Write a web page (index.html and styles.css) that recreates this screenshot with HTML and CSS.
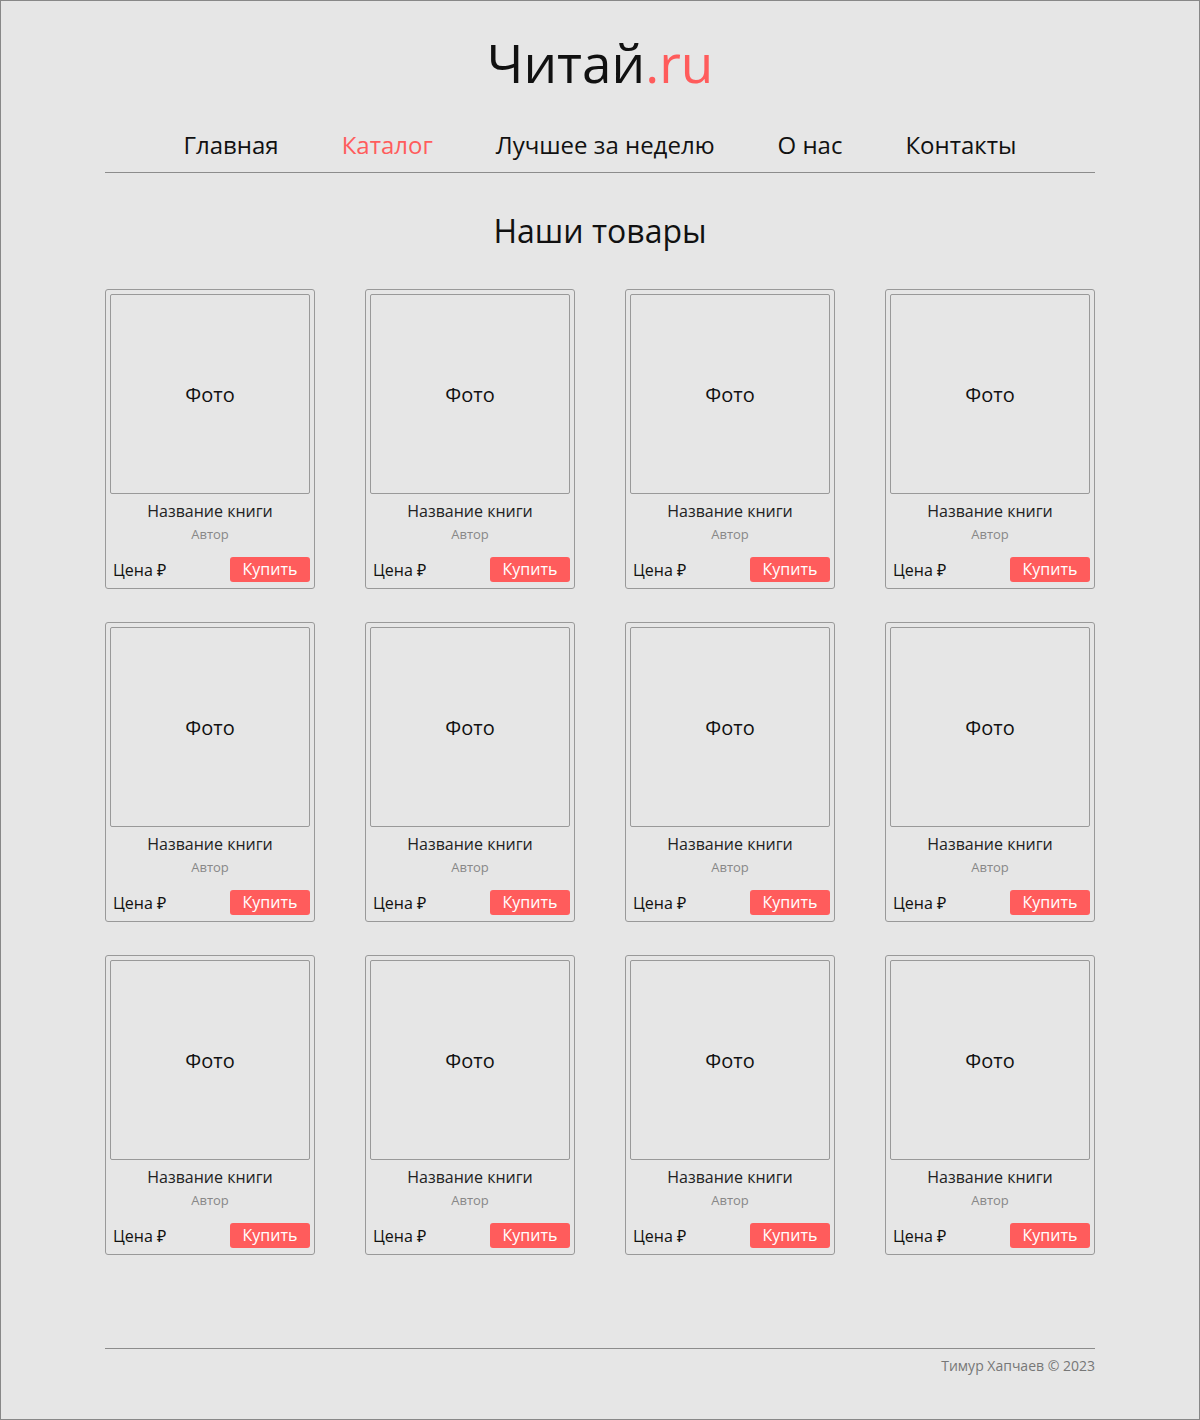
FILE: index.html
```html
<!DOCTYPE html>
<html lang="ru">
<head>
<meta charset="utf-8">
<title>Читай.ru</title>
<link rel="stylesheet" href="styles.css">
</head>
<body>
<div class="page">
  <header class="header">
    <div class="logo">Читай<span class="logo-accent">.ru</span></div>
    <nav class="nav">
      <a class="nav-link" href="#">Главная</a>
      <a class="nav-link nav-link-active" href="#">Каталог</a>
      <a class="nav-link" href="#">Лучшее за неделю</a>
      <a class="nav-link" href="#">О нас</a>
      <a class="nav-link" href="#">Контакты</a>
    </nav>
  </header>
  <main class="main">
    <h1 class="title">Наши товары</h1>
    <div class="grid">
      <div class="card"><div class="photo">Фото</div><div class="book-name">Название книги</div><div class="author">Автор</div><div class="card-bottom"><span class="price">Цена ₽</span><button class="buy">Купить</button></div></div>
      <div class="card"><div class="photo">Фото</div><div class="book-name">Название книги</div><div class="author">Автор</div><div class="card-bottom"><span class="price">Цена ₽</span><button class="buy">Купить</button></div></div>
      <div class="card"><div class="photo">Фото</div><div class="book-name">Название книги</div><div class="author">Автор</div><div class="card-bottom"><span class="price">Цена ₽</span><button class="buy">Купить</button></div></div>
      <div class="card"><div class="photo">Фото</div><div class="book-name">Название книги</div><div class="author">Автор</div><div class="card-bottom"><span class="price">Цена ₽</span><button class="buy">Купить</button></div></div>
      <div class="card"><div class="photo">Фото</div><div class="book-name">Название книги</div><div class="author">Автор</div><div class="card-bottom"><span class="price">Цена ₽</span><button class="buy">Купить</button></div></div>
      <div class="card"><div class="photo">Фото</div><div class="book-name">Название книги</div><div class="author">Автор</div><div class="card-bottom"><span class="price">Цена ₽</span><button class="buy">Купить</button></div></div>
      <div class="card"><div class="photo">Фото</div><div class="book-name">Название книги</div><div class="author">Автор</div><div class="card-bottom"><span class="price">Цена ₽</span><button class="buy">Купить</button></div></div>
      <div class="card"><div class="photo">Фото</div><div class="book-name">Название книги</div><div class="author">Автор</div><div class="card-bottom"><span class="price">Цена ₽</span><button class="buy">Купить</button></div></div>
      <div class="card"><div class="photo">Фото</div><div class="book-name">Название книги</div><div class="author">Автор</div><div class="card-bottom"><span class="price">Цена ₽</span><button class="buy">Купить</button></div></div>
      <div class="card"><div class="photo">Фото</div><div class="book-name">Название книги</div><div class="author">Автор</div><div class="card-bottom"><span class="price">Цена ₽</span><button class="buy">Купить</button></div></div>
      <div class="card"><div class="photo">Фото</div><div class="book-name">Название книги</div><div class="author">Автор</div><div class="card-bottom"><span class="price">Цена ₽</span><button class="buy">Купить</button></div></div>
      <div class="card"><div class="photo">Фото</div><div class="book-name">Название книги</div><div class="author">Автор</div><div class="card-bottom"><span class="price">Цена ₽</span><button class="buy">Купить</button></div></div>
    </div>
  </main>
  <footer class="footer">Тимур Хапчаев © 2023</footer>
</div>
</body>
</html>
```

FILE: styles.css
```css
* { box-sizing: border-box; }
html, body { margin: 0; padding: 0; }
body {
  background: #e6e6e6;
  font-family: "Open Sans", "Noto Sans", sans-serif;
  color: #111;
}
.page {
  width: 1200px;
  height: 1420px;
  border: 1px solid #888;
  background: #e6e6e6;
  display: flex;
  flex-direction: column;
  align-items: center;
}
.header {
  width: 990px;
  display: flex;
  flex-direction: column;
  align-items: center;
  padding-top: 27px;
  border-bottom: 1px solid #8c8c8c;
}
.logo {
  font-size: 53px;
  line-height: 70px;
  color: #111;
}
.logo-accent { color: #ff5c5c; }
.nav {
  display: flex;
  gap: 63px;
  margin-top: 31px;
  padding-bottom: 11px;
}
.nav-link {
  font-size: 24px;
  line-height: 32px;
  color: #111;
  text-decoration: none;
}
.nav-link-active { color: #ff5c5c; }
.main {
  width: 990px;
  display: flex;
  flex-direction: column;
  align-items: center;
}
.title {
  font-weight: 400;
  font-size: 32px;
  line-height: 44px;
  margin: 36px 0 0;
}
.grid {
  margin-top: 36px;
  display: grid;
  grid-template-columns: repeat(4, 210px);
  column-gap: 50px;
  row-gap: 33px;
}
.card {
  height: 300px;
  border: 1px solid #999;
  border-radius: 3px;
  padding: 4px;
  display: flex;
  flex-direction: column;
  align-items: center;
}
.photo {
  width: 200px;
  height: 200px;
  border: 1px solid #999;
  border-radius: 2px;
  display: flex;
  align-items: center;
  justify-content: center;
  font-size: 20px;
}
.book-name {
  margin-top: 6px;
  font-size: 16px;
  line-height: 22px;
  color: #222;
}
.author {
  font-size: 13px;
  line-height: 20px;
  color: #888;
  margin-top: 2px;
}
.card-bottom {
  margin-top: auto;
  width: 100%;
  display: flex;
  align-items: center;
  justify-content: space-between;
  padding-left: 3px;
  padding-bottom: 2px;
}
.price {
  font-size: 16px;
  color: #111;
}
.buy {
  width: 80px;
  height: 25px;
  border: none;
  border-radius: 3px;
  background: #ff5c5c;
  color: #fff;
  font-family: "Open Sans", "Noto Sans", sans-serif;
  font-size: 16px;
  padding: 0;
  line-height: 25px;
}
.footer {
  width: 990px;
  margin-top: auto;
  margin-bottom: 44px;
  border-top: 1px solid #8c8c8c;
  padding-top: 8px;
  text-align: right;
  font-size: 14px;
  line-height: 18px;
  color: #777;
}
```
